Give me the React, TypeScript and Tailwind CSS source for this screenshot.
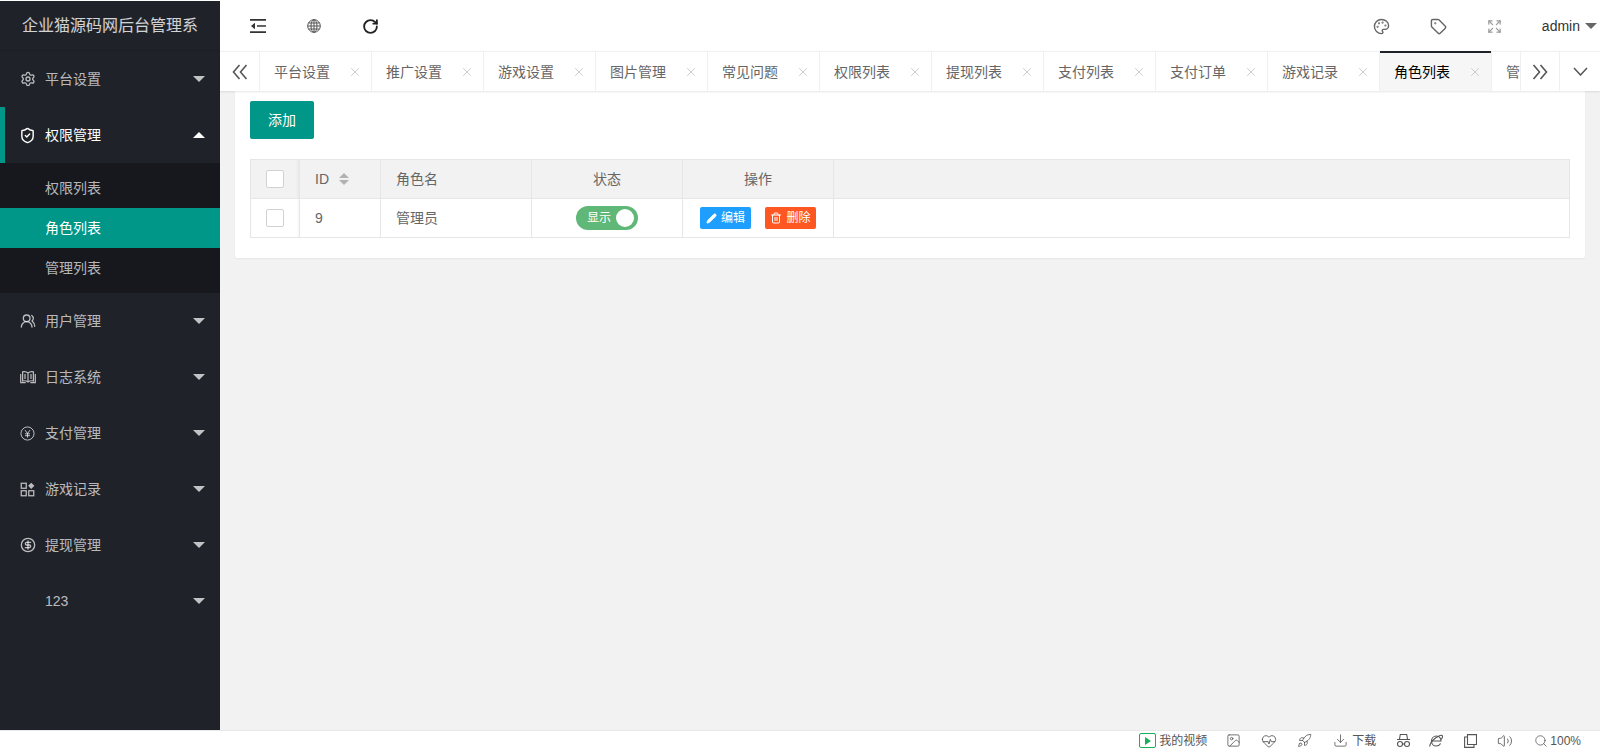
import React from 'react';
import {
  CircleDollarSign, Download, Expand, HeartPulse, Image, Palette, Pencil, RotateCw, Rocket, Search, Settings,
  ShieldCheck, Tag, Trash2, UsersRound, Volume2, X,
} from 'lucide-react';

const TABS = ['平台设置', '推广设置', '游戏设置', '图片管理', '常见问题', '权限列表', '提现列表', '支付列表', '支付订单', '游戏记录', '角色列表', '管理列表'];

function YenIcon() {
  return (
    <svg width="15" height="15" viewBox="0 0 24 24" fill="none" stroke="currentColor" strokeWidth="1.6">
      <circle cx="12" cy="12" r="10.5" />
      <path d="M8 6.5l4 5.5 4-5.5M12 12v6.5M8 12.5h8M8 15.5h8" />
    </svg>
  );
}

function GridIcon() {
  return (
    <svg width="15" height="15" viewBox="0 0 24 24" fill="none" stroke="currentColor" strokeWidth="2">
      <rect x="2" y="2" width="8" height="8" />
      <rect x="2" y="14" width="8" height="8" />
      <rect x="14" y="14" width="8" height="8" />
      <path d="M18 1l5 5-5 5-5-5z" fill="currentColor" stroke="none" />
    </svg>
  );
}

function BookIcon() {
  return (
    <svg width="16" height="14" viewBox="0 0 16 14" fill="none" stroke="currentColor" strokeWidth="1.2">
      <path d="M8 3C6.5 1.6 4.5 1.3 2.6 1.8V11c1.9-.5 3.9-.2 5.4 1 1.5-1.2 3.5-1.5 5.4-1V1.8C11.5 1.3 9.500 1.600 8 3zM8 3v9" />
      <path d="M5 4v5M11 4v5M.7 4v8.600h5M15.300 4v8.600h-5" />
    </svg>
  );
}

function ShrinkIcon() {
  return (
    <svg width="16" height="14" viewBox="0 0 16 14" fill="currentColor">
      <path d="M0 0h16v1.700H0zM0 12.300h16V14H0zM7 6.200h9v1.600H7z" />
      <path d="M5 3.800v6.400L1 7z" />
    </svg>
  );
}

function GlobeIcon() {
  return (
    <svg width="14" height="14" viewBox="0 0 14 14" fill="none" stroke="currentColor" strokeWidth="1">
      <circle cx="7" cy="7" r="6.300" />
      <ellipse cx="7" cy="7" rx="3" ry="6.300" />
      <path d="M7 .7v12.600M.7 7h12.600M1.500 4h11M1.500 10h11" />
    </svg>
  );
}

function ChevronsIcon({ flip }: { flip?: boolean }) {
  return (
    <svg width="16" height="16" viewBox="0 0 16 16" fill="none" stroke="currentColor" strokeWidth="1.600" className={flip ? 'rotate-180' : ''}>
      <path d="M7.500 1L1.500 8l6 7M14.500 1l-6 7 6 7" />
    </svg>
  );
}

function MaskIcon() {
  return (
    <svg width="15" height="15" viewBox="0 0 15 15" fill="none" stroke="currentColor" strokeWidth="1.100" className="ml-5">
      <path d="M3.500 6l.8-4.500h6.400l.8 4.500M1 6.500h13" />
      <circle cx="4" cy="11" r="2.500" />
      <circle cx="11" cy="11" r="2.500" />
      <path d="M6.500 11h2" />
    </svg>
  );
}

function IeIcon() {
  return (
    <svg width="14" height="14" viewBox="0 0 14 14" fill="none" stroke="currentColor" strokeWidth="1.100" className="ml-[18px]">
      <path d="M2.500 7h9.500c0-3-2-5-4.700-5S2.500 4.300 2.500 7.200c0 2.800 2 4.800 4.800 4.800 2 0 3.500-1 4.300-2.500" />
      <path d="M1 12.500C.2 11 3 6.500 6.500 4 10 1.500 13 .500 13.500 2c.3 1-.6 2.500-1.500 3.500" />
    </svg>
  );
}

function WindowIcon() {
  return (
    <svg width="13" height="14" viewBox="0 0 13 14" fill="none" stroke="currentColor" strokeWidth="1.100" className="ml-[21px]">
      <path d="M3.500 10.500V.6h9v9.900zM3.500 3H.6v10.400h9.400v-2.900" />
    </svg>
  );
}

function Caret({ up }: { up?: boolean }) {
  return up ? (
    <span className="w-0 h-0 border-x-[6px] border-b-[6px] border-x-transparent border-b-white" />
  ) : (
    <span className="w-0 h-0 border-x-[6px] border-t-[6px] border-x-transparent border-t-[#c2c3c5]" />
  );
}

function MenuItem({ icon, label, active }: { icon?: React.ReactNode; label: string; active?: boolean }) {
  return (
    <div className={`relative flex items-center h-[56px] pl-5 pr-[15px] text-sm ${active ? 'text-white' : 'text-white/70'}`}>
      {active && <span className="absolute left-0 top-0 bottom-0 w-[5px] bg-[#009688]" />}
      <span className="w-[25px] flex items-center">{icon}</span>
      <span className="flex-1">{label}</span>
      <Caret up={active} />
    </div>
  );
}

function Checkbox() {
  return <span className="block mx-auto w-[18px] h-[18px] bg-white border border-[#d2d2d2] rounded-[2px]" />;
}

export default function App() {
  return (
    <div className="h-[750px] w-[1600px] overflow-hidden flex flex-col bg-white pt-px font-['Liberation_Sans','Noto_Sans_CJK_SC',sans-serif]">
      <div className="flex h-[729px]">
        {/* sidebar */}
        <aside className="w-[220px] shrink-0 bg-[#20222a]">
          <div className="h-[50px] pl-[22px] flex items-center border-b border-[#1c1e25]">
            <div className="whitespace-nowrap text-base text-white/80">企业猫源码网后台管理系</div>
          </div>
          <MenuItem icon={<Settings size={16} />} label="平台设置" />
          <MenuItem icon={<ShieldCheck size={17} className="-ml-px" />} label="权限管理" active />
          <div className="bg-[#17181d] py-[5px] text-sm text-white/70">
            <div className="h-10 flex items-center pl-[45px]">权限列表</div>
            <div className="h-10 flex items-center pl-[45px] bg-[#009688] text-white">角色列表</div>
            <div className="h-10 flex items-center pl-[45px]">管理列表</div>
          </div>
          <MenuItem icon={<UsersRound size={16} />} label="用户管理" />
          <MenuItem icon={<BookIcon />} label="日志系统" />
          <MenuItem icon={<YenIcon />} label="支付管理" />
          <MenuItem icon={<GridIcon />} label="游戏记录" />
          <MenuItem icon={<CircleDollarSign size={16} />} label="提现管理" />
          <MenuItem label="123" />
        </aside>

        <div className="flex-1 min-w-0 flex flex-col bg-[#f2f2f2]">
          {/* top bar */}
          <div className="h-[50px] shrink-0 bg-white flex items-center text-[#333]">
            <div className="flex items-center pl-[30px]">
              <ShrinkIcon />
              <span className="ml-[41px] text-[#555]"><GlobeIcon /></span>
              <RotateCw size={17} strokeWidth={2.6} className="ml-[41px] text-[#222]" />
            </div>
            <div className="ml-auto flex items-center gap-[40px] text-[#666]">
              <Palette size={17} />
              <Tag size={17} />
              <Expand size={15} className="text-[#999]" />
              <div className="flex items-center gap-[5px] pr-[3px] text-sm text-[#333]">
                admin
                <span className="w-0 h-0 border-x-[6px] border-t-[6px] border-x-transparent border-t-[#666]" />
              </div>
            </div>
          </div>

          {/* tabs */}
          <div className="relative z-10 h-10 shrink-0 bg-white flex border-t border-[#f0f0f0] shadow-[0_1px_2px_rgba(0,0,0,0.1)] text-sm text-[#666]">
            <div className="w-[40px] shrink-0 flex items-center justify-center border-r border-[#f0f0f0] text-[#555]">
              <ChevronsIcon />
            </div>
            <div className="flex-1 min-w-0 flex overflow-hidden -mt-px">
              {TABS.map((t, i) => (
                <div
                  key={t}
                  className={`relative w-[112px] shrink-0 flex items-center justify-between pt-px pl-[14px] pr-[9px] border-r border-[#f0f0f0] ${i === 10 ? 'bg-[#f6f6f6] text-black' : ''}`}
                >
                  {i === 10 && <span className="absolute top-0 left-0 right-0 h-[2px] bg-[#20222a]" />}
                  <span className="whitespace-nowrap">{t}</span>
                  <X size={14} strokeWidth={1.6} className="text-[#c8c8cc]" />
                </div>
              ))}
            </div>
            <div className="w-[40px] shrink-0 flex items-center justify-center border-x border-[#f0f0f0] text-[#555]">
              <ChevronsIcon flip />
            </div>
            <div className="w-[40px] shrink-0 flex items-center justify-center text-[#555]">
              <svg width="15" height="9" viewBox="0 0 15 9" fill="none" stroke="currentColor" strokeWidth="1.500">
                <path d="M1 1l6.500 7L14 1" />
              </svg>
            </div>
          </div>

          {/* content */}
          <div className="flex-1 px-[15px]">
            <div className="bg-white rounded-b-[2px] shadow-[0_1px_2px_rgba(0,0,0,0.05)] px-[15px] pt-[10px] pb-5">
              <button className="h-[38px] w-16 bg-[#009688] text-white text-sm rounded-[2px]">添加</button>
              <table className="mt-5 w-[1320px] table-fixed border-collapse text-sm text-[#666]">
                <colgroup>
                  <col className="w-[49px]" />
                  <col className="w-[81px]" />
                  <col className="w-[151px]" />
                  <col className="w-[151px]" />
                  <col className="w-[151px]" />
                  <col />
                </colgroup>
                <thead>
                  <tr className="h-[39px] bg-[#f2f2f2]">
                    <th className="border border-[#e6e6e6] font-normal shadow-[inset_-3px_0_3px_-2px_rgba(0,0,0,0.06)]"><Checkbox /></th>
                    <th className="border border-[#e6e6e6] font-normal text-left pl-[15px]">
                      <span className="inline-flex items-center gap-[10px]">
                        ID
                        <span className="flex flex-col gap-[2px]">
                          <span className="w-0 h-0 border-x-[5px] border-b-[5px] border-x-transparent border-b-[#b2b2b2]" />
                          <span className="w-0 h-0 border-x-[5px] border-t-[5px] border-x-transparent border-t-[#b2b2b2]" />
                        </span>
                      </span>
                    </th>
                    <th className="border border-[#e6e6e6] font-normal text-left pl-[15px]">角色名</th>
                    <th className="border border-[#e6e6e6] font-normal">状态</th>
                    <th className="border border-[#e6e6e6] font-normal">操作</th>
                    <th className="border border-[#e6e6e6]" />
                  </tr>
                </thead>
                <tbody>
                  <tr className="h-[39px]">
                    <td className="border border-[#e6e6e6] shadow-[inset_-3px_0_3px_-2px_rgba(0,0,0,0.04)]"><Checkbox /></td>
                    <td className="border border-[#e6e6e6] pl-[15px]">9</td>
                    <td className="border border-[#e6e6e6] pl-[15px]">管理员</td>
                    <td className="border border-[#e6e6e6]">
                      <div className="mx-auto w-[62px] h-6 rounded-full bg-[#5fb878] flex items-center justify-between pl-[11px] pr-1 text-xs text-white">
                        显示
                        <span className="w-[18px] h-[18px] rounded-full bg-white" />
                      </div>
                    </td>
                    <td className="border border-[#e6e6e6]">
                      <div className="flex justify-center gap-[14px] text-xs text-white">
                        <span className="w-[51px] h-[22px] rounded-[2px] bg-[#1e9fff] flex items-center justify-center gap-[4px]">
                          <Pencil size={11} fill="currentColor" />编辑
                        </span>
                        <span className="w-[51px] h-[22px] rounded-[2px] bg-[#ff5722] flex items-center justify-center gap-[4px]">
                          <Trash2 size={12} />删除
                        </span>
                      </div>
                    </td>
                    <td className="border border-[#e6e6e6]" />
                  </tr>
                </tbody>
              </table>
            </div>
          </div>
        </div>
      </div>

      {/* browser status bar */}
      <div className="h-[20px] shrink-0 bg-white border-t border-[#e8e8e8] flex items-center justify-end pr-[19px] text-xs text-[#555]">
        <span className="w-[17px] h-[15px] border border-[#1aad5a] rounded-[2px] flex items-center justify-center mr-[3px]">
          <span className="w-0 h-0 border-y-[4px] border-l-[6px] border-y-transparent border-l-[#1aad5a]" />
        </span>
        <span>我的视频</span>
        <Image size={15} strokeWidth={1.3} className="ml-[19px]" />
        <HeartPulse size={16} strokeWidth={1.3} className="ml-5" />
        <Rocket size={15} strokeWidth={1.3} className="ml-5" />
        <Download size={15} strokeWidth={1.3} className="ml-[21px]" />
        <span className="ml-[4px]">下载</span>
        <MaskIcon />
        <IeIcon />
        <WindowIcon />
        <Volume2 size={16} strokeWidth={1.3} className="ml-5" />
        <Search size={14} strokeWidth={1.3} className="ml-[21px]" />
        <span className="ml-[2px]">100%</span>
      </div>
    </div>
  );
}
